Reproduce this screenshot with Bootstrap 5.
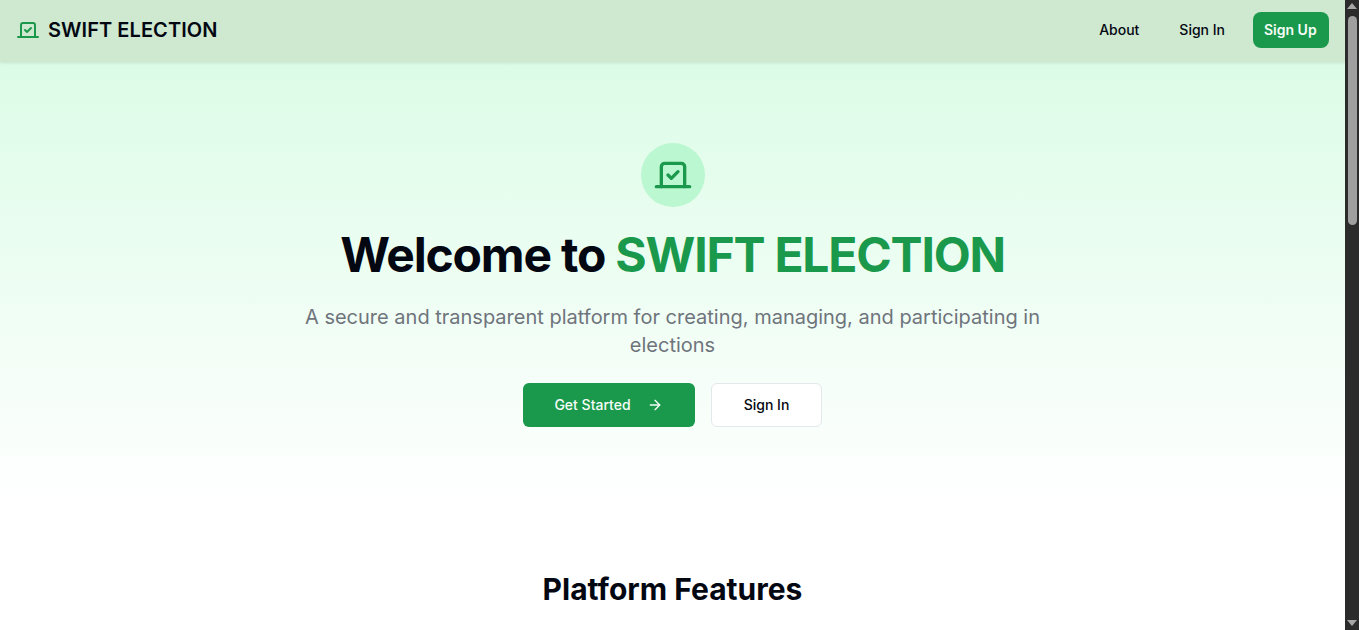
<!doctype html>
<html lang="en"><head><meta charset="utf-8"><title>Swift Election</title>
<link href="https://cdn.jsdelivr.net/npm/bootstrap@5.3.0/dist/css/bootstrap.min.css" rel="stylesheet">
<style>
html,body{height:630px;overflow:hidden;margin:0}
body{font-family:Inter,"Liberation Sans",sans-serif;color:#030712;background:#fff}
.shell{height:630px}
.viewport{width:1345px;height:630px;overflow:hidden}
.topbar{height:62px;background:#cfe8d0;padding:0 16px 2px 16px;box-shadow:0 1px 3px rgba(0,0,0,.1);position:relative;z-index:2}
.brandname{font-size:20px;font-weight:600;line-height:28px;margin-left:8px;color:#030712;text-decoration:none;letter-spacing:.07px}
.navlink{font-size:14px;font-weight:500;line-height:20px;color:#030712;text-decoration:none;padding:8px 16px;margin-right:8px;white-space:nowrap}
.navlink.last{margin-right:12px}
.signup{font-size:14px;font-weight:600;line-height:20px;background:#1a994c;border:0;color:#f6fdf8;border-radius:8px;padding:8px 12px 8px 11px;height:36px;width:76px;white-space:nowrap;text-align:left}
.hero{height:445px;background:linear-gradient(180deg,#dcfce7 0%,#fff 100%);padding-top:81px}
.heroicon{width:64px;height:64px;border-radius:50%;background:#bbf7d0}
.herotitle{font-size:48px;font-weight:700;line-height:48px;letter-spacing:-1.2px;margin:24px 0 0;color:#030712}
.herotitle span{color:#1a994c}
.herolead{font-size:20px;line-height:28px;color:#6f747c;width:768px;margin:24px 0 0;text-align:center}
.herobtns{margin-top:24px;gap:16px}
.btnmain,.btnalt{font-size:14px;font-weight:500;line-height:20px;height:44px;border-radius:6px;white-space:nowrap}
.btnmain{width:172px;background:#1a994c;color:#f6fdf8;border:0;padding:0 1px 0 0}
.btnalt{width:111px;background:#fff;color:#030712;border:1px solid #e4e7eb}
.features{padding-top:64px}
.featuretitle{font-size:30px;font-weight:700;line-height:36px;margin:0;color:#030712;text-align:center}
.fakebar{width:14px;height:630px;background:#2b2b2b;flex:none}
.thumb{width:9px;background:#9f9f9f;border-radius:5px;height:209px;margin:0 auto}
.arrowup,.arrowdown{width:0;height:0;border-left:5px solid transparent;border-right:5px solid transparent;margin:0 auto}
.arrowup{border-bottom:6px solid #a6a6a6;margin-top:3px;margin-bottom:7px}
.arrowdown{border-top:6px solid #a6a6a6;margin-bottom:4px}
</style></head>
<body>
<div class="shell d-flex">
<div class="viewport">
  <nav class="topbar d-flex align-items-center justify-content-between">
    <div class="d-flex align-items-center">
      <svg width="24" height="24" viewBox="0 0 24 24" fill="none" stroke="#1a994c" stroke-width="2" stroke-linecap="round" stroke-linejoin="round"><path d="M5 19V7a2 2 0 0 1 2-2h10a2 2 0 0 1 2 2v12"/><path d="M2 19h20"/><path d="m9 12 2 2 4-4"/></svg>
      <a href="#" class="brandname">SWIFT ELECTION</a>
    </div>
    <div class="d-flex align-items-center">
      <a href="#" class="navlink">About</a>
      <a href="#" class="navlink last">Sign In</a>
      <button class="signup">Sign Up</button>
    </div>
  </nav>
  <section class="hero d-flex flex-column align-items-center">
    <div class="heroicon d-flex align-items-center justify-content-center">
      <svg width="40" height="40" viewBox="0 0 24 24" fill="none" stroke="#1a994c" stroke-width="2" stroke-linecap="round" stroke-linejoin="round"><path d="M5 19V7a2 2 0 0 1 2-2h10a2 2 0 0 1 2 2v12"/><path d="M2 19h20"/><path d="m9 12 2 2 4-4"/></svg>
    </div>
    <h1 class="herotitle">Welcome to <span>SWIFT ELECTION</span></h1>
    <p class="herolead">A secure and transparent platform for creating, managing, and participating in elections</p>
    <div class="herobtns d-flex">
      <button class="btnmain d-flex align-items-center justify-content-center">Get Started
        <svg class="ms-3" width="16" height="16" viewBox="0 0 24 24" fill="none" stroke="#f6fdf8" stroke-width="2" stroke-linecap="round" stroke-linejoin="round"><path d="M5 12h14"/><path d="m12 5 7 7-7 7"/></svg>
      </button>
      <button class="btnalt">Sign In</button>
    </div>
  </section>
  <section class="features"><h2 class="featuretitle">Platform Features</h2></section>
</div>
<div class="fakebar d-flex flex-column">
  <div class="arrowup"></div>
  <div class="thumb"></div>
  <div class="flex-grow-1"></div>
  <div class="arrowdown"></div>
</div>
</div>
</body></html>
